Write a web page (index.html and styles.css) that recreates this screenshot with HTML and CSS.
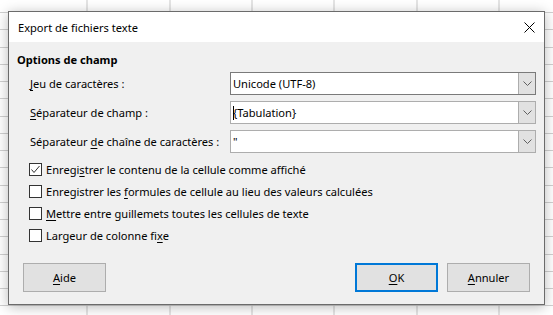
FILE: index.html
```html
<!DOCTYPE html>
<html lang="fr">
<head>
<meta charset="utf-8">
<title>Export de fichiers texte</title>
<link rel="stylesheet" href="styles.css">
</head>
<body>
<div class="desktop">
  <div class="dialog">
    <div class="titlebar">
      <span class="title">Export de fichiers texte</span>
      <svg class="close" width="11" height="11" viewBox="0 0 11 11"><path d="M0.5 0.5 L10.5 10.5 M10.5 0.5 L0.5 10.5" stroke="#000" stroke-width="1" fill="none"/></svg>
    </div>
    <div class="content">
      <div class="heading">Options de champ</div>
      <div class="fields">
        <label class="lbl"><u>J</u>eu de caractères :</label>
        <div class="combo combo-dark">
          <span class="value">Unicode (UTF-8)</span>
          <span class="drop"><svg width="9" height="5" viewBox="0 0 9 5"><path d="M0.5 0.5 L4.5 4.5 L8.5 0.5" stroke="#606060" fill="none"/></svg></span>
        </div>
        <label class="lbl"><u>S</u>éparateur de champ :</label>
        <div class="combo">
          <span class="value"><span class="caret"></span>{Tabulation}</span>
          <span class="drop"><svg width="9" height="5" viewBox="0 0 9 5"><path d="M0.5 0.5 L4.5 4.5 L8.5 0.5" stroke="#606060" fill="none"/></svg></span>
        </div>
        <label class="lbl">Séparateur <u>d</u>e chaîne de caractères :</label>
        <div class="combo">
          <span class="value">"</span>
          <span class="drop"><svg width="9" height="5" viewBox="0 0 9 5"><path d="M0.5 0.5 L4.5 4.5 L8.5 0.5" stroke="#606060" fill="none"/></svg></span>
        </div>
      </div>
      <div class="checks">
        <div class="check"><span class="box"><svg width="11" height="11" viewBox="0 0 11 11"><path d="M1.5 5.5 L4 8.5 L9.5 2" stroke="#333" fill="none"/></svg></span><span>Enregi<u>s</u>trer le contenu de la cellule comme affiché</span></div>
        <div class="check"><span class="box"></span><span>Enregistrer les <u>f</u>ormules de cellule au lieu des valeurs calculées</span></div>
        <div class="check"><span class="box"></span><span><u>M</u>ettre entre guillemets toutes les cellules de texte</span></div>
        <div class="check"><span class="box"></span><span>Largeur de colonne fi<u>x</u>e</span></div>
      </div>
      <div class="buttons">
        <button class="btn"><u>A</u>ide</button>
        <span class="spacer"></span>
        <button class="btn btn-default"><u>O</u>K</button>
        <button class="btn"><u>A</u>nnuler</button>
      </div>
    </div>
  </div>
</div>
</body>
</html>
```
FILE: styles.css
```css
html, body {
  margin: 0;
  padding: 0;
}
body {
  width: 553px;
  height: 315px;
  overflow: hidden;
  font-family: "Noto Sans", "Open Sans", sans-serif;
  font-size: 11.1px;
  color: #000;
}
.desktop {
  width: 553px;
  height: 315px;
  overflow: hidden;
  padding-top: 11px;
  box-sizing: border-box;
  background-color: #fff;
  background-image:
    repeating-linear-gradient(to right, transparent 0, transparent 81.3px, #c8c8c8 81.3px, #c8c8c8 82.3px),
    repeating-linear-gradient(to bottom, transparent 0, transparent 16.25px, #d0d0d0 16.25px, #d0d0d0 17.25px);
  background-position: 5.5px 0, 0 -4px;
}
.dialog {
  margin-left: 8px;
  width: 537px;
  height: 294px;
  box-sizing: border-box;
  border: 1px solid #6b6b6b;
  box-shadow: 0 2px 12px rgba(0,0,0,0.28);
  display: flex;
  flex-direction: column;
  background: #f0f0f0;
}
.titlebar {
  height: 30px;
  background: #fff;
  display: flex;
  align-items: center;
  justify-content: space-between;
  padding: 0 9px 0 9px;
  flex: none;
}
.close {
  display: block;
}
.content {
  flex: 1;
  padding: 10px 8px 0 8px;
  display: flex;
  flex-direction: column;
}
.heading {
  font-weight: bold;
  line-height: 15px;
}
.fields {
  display: grid;
  grid-template-columns: 200px 1fr;
  row-gap: 6px;
  margin-top: 5px;
  padding-left: 13px;
  align-items: center;
}
.lbl {
  white-space: nowrap;
}
u {
  text-decoration: underline;
  text-underline-offset: 2px;
}
.combo {
  height: 23px;
  box-sizing: border-box;
  border: 1px solid #adadad;
  background: #fff;
  display: flex;
  align-items: stretch;
}
.combo-dark {
  border-color: #7a7a7a;
}
.value {
  flex: 1;
  display: flex;
  align-items: center;
  padding-left: 2px;
  white-space: nowrap;
}
.caret {
  display: inline-block;
  width: 1px;
  height: 14px;
  background: #000;
  margin-right: -1px;
}
.drop {
  width: 16px;
  flex: none;
  background: #e1e1e1;
  border-left: 1px solid #adadad;
  display: flex;
  align-items: center;
  justify-content: center;
}
.drop svg {
  display: block;
}
.checks {
  margin-top: 5px;
  padding-left: 12px;
  display: flex;
  flex-direction: column;
}
.check {
  height: 22px;
  display: flex;
  align-items: center;
  white-space: nowrap;
}
.box {
  width: 13px;
  height: 13px;
  box-sizing: border-box;
  border: 1px solid #333;
  background: #fff;
  margin-right: 4px;
  flex: none;
  display: flex;
  align-items: center;
  justify-content: center;
}
.box svg {
  display: block;
}
.buttons {
  margin-top: auto;
  margin-bottom: 12px;
  display: flex;
  align-items: center;
  padding: 0 6px 0 6px;
}
.spacer {
  flex: 1;
}
.btn {
  width: 83px;
  height: 29px;
  box-sizing: border-box;
  border: 1px solid #adadad;
  background: #e1e1e1;
  font-family: inherit;
  font-size: 11.1px;
  color: #000;
  padding: 0;
  margin: 0;
}
.btn + .btn {
  margin-left: 9px;
}
.btn-default {
  border: 2px solid #0078d7;
}
```
